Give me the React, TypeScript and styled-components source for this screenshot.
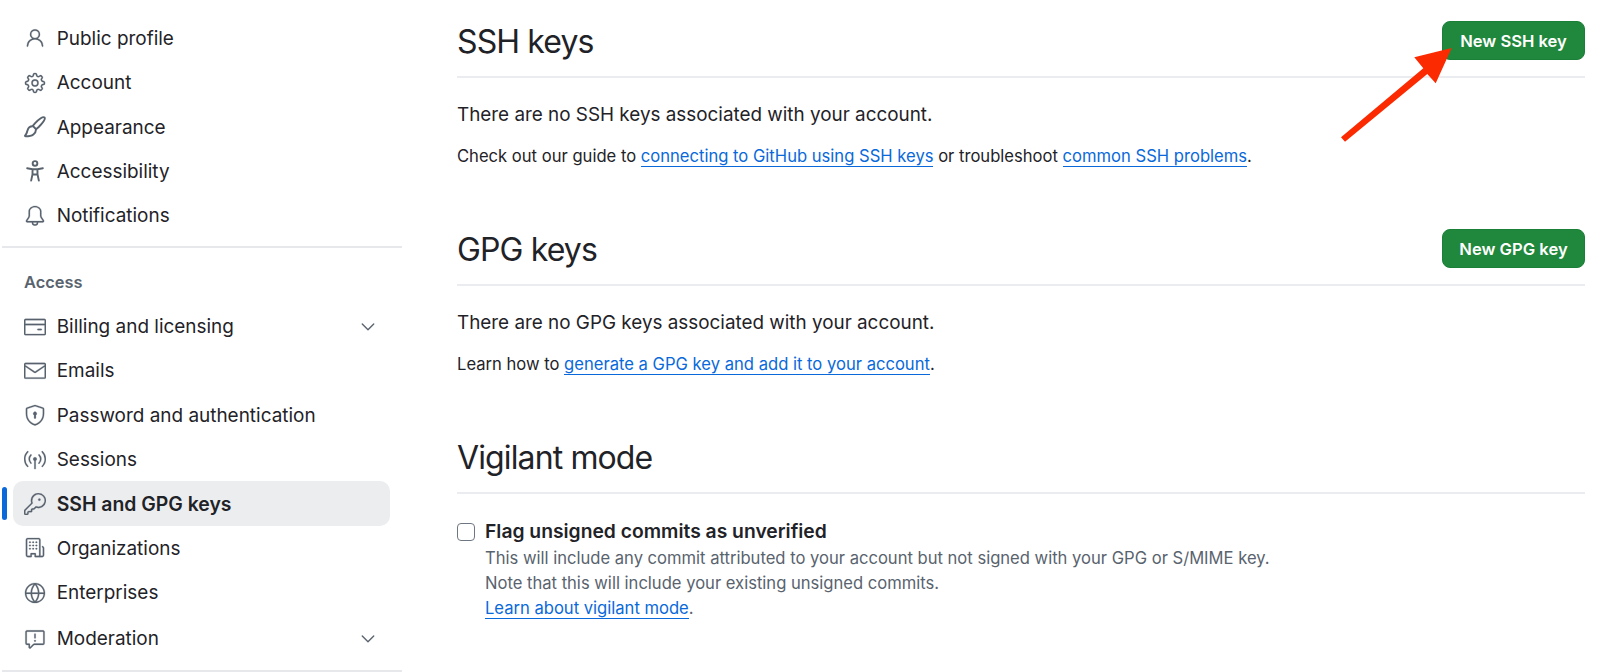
import React from "react";
import styled, { createGlobalStyle } from "styled-components";
import {
  GoPerson, GoGear, GoBell, GoCreditCard, GoMail,
  GoShieldLock, GoBroadcast, GoKey, GoOrganization, GoGlobe, GoReport, GoChevronDown,
} from "react-icons/go";

const Global = createGlobalStyle`
  html, body { margin: 0; padding: 0; background: #fff; }
  body { font-family: Inter, "Liberation Sans", sans-serif; color: #1f2328; width: 1600px; height: 672px; overflow: hidden; }
`;
const Page = styled.div`
  position: relative;
  display: grid;
  grid-template-columns: 402px 1128px;
  column-gap: 55px;
  height: 672px;
  overflow: hidden;
`;
const Sidebar = styled.nav`
  display: flex;
  flex-direction: column;
  padding-top: 15.6px;
`;
const Row = styled.div<{ $active?: boolean; $offset?: number }>`
  position: relative;
  display: flex;
  align-items: center;
  flex: none;
  height: 44.4px;
  margin: ${p => p.$offset ?? 0}px 0 0 12.7px;
  width: 377.3px;
  padding: 1px 0 0 11px;
  box-sizing: border-box;
  border-radius: 10px;
  font-size: ${p => (p.$active ? 19.4 : 18.95)}px;
  font-weight: ${p => (p.$active ? 600 : 400)};
  background: ${p => (p.$active ? "#ecedef" : "transparent")};
  color: #1f2328;
`;
const ActiveBar = styled.span`
  position: absolute;
  left: -11px;
  top: 5.6px;
  width: 5.3px;
  height: 33px;
  border-radius: 3px;
  background: #0969da;
`;
const IconSlot = styled.span`
  display: flex;
  width: 22px;
  margin-right: 11px;
  color: #59636e;
  svg { width: 22px; height: 22px; display: block; stroke-width: 0.25; }
`;
const Chevron = styled.span`
  position: absolute;
  right: 11px;
  display: flex;
  color: #59636e;
  svg { width: 22px; height: 22px; display: block; }
`;
const Divider = styled.hr<{ $gap: number }>`
  border: 0;
  flex: none;
  height: 2px;
  background: #e6e8ec;
  margin: ${p => p.$gap}px 0 0 1.7px;
  width: 400px;
`;
const GroupLabel = styled.div`
  font-size: 16.4px;
  font-weight: 600;
  color: #59636e;
  padding-left: 24px;
  margin: 22.7px 0 11.1px;
  line-height: 22px;
`;
const Main = styled.main`
  display: flex;
  flex-direction: column;
  padding-top: 21px;
`;
const Section = styled.section`
  height: 208px;
`;
const Head = styled.div`
  display: flex;
  align-items: flex-start;
  justify-content: space-between;
  height: 57px;
  box-sizing: border-box;
  border-bottom: 2px solid #ebecf0;
`;
const Title = styled.h2`
  margin: 0;
  font-size: 32px;
  line-height: 42px;
  letter-spacing: -0.88px;
  font-weight: 400;
  color: #1f2328;
`;
const PrimaryButton = styled.button`
  height: 39px;
  width: 143px;
  border: 1px solid #1a7f37;
  border-radius: 8px;
  background: #1f883d;
  color: #fff;
  padding: 0;
  font: 600 16.6px Inter, "Liberation Sans", sans-serif;
`;
const Lead = styled.p`
  margin: 24px 0 0;
  font-size: 18.87px;
  line-height: 26px;
`;
const Note = styled.p`
  margin: 15.3px 0 0;
  font-size: 16.6px;
  line-height: 26px;
`;
const Link = styled.a`
  color: #0969da;
  border-bottom: 1px solid #0969da;
  text-decoration: none;
`;
const CheckRow = styled.div`
  display: flex;
  gap: 10px;
  margin-top: 24px;
`;
const CheckBox = styled.span`
  width: 18px;
  height: 18px;
  margin-top: 5px;
  border: 1.5px solid #6e7781;
  border-radius: 4px;
  box-sizing: border-box;
  flex: none;
`;
const CheckTitle = styled.div`
  font-size: 19.3px;
  font-weight: 600;
  line-height: 26px;
  margin-bottom: 1.8px;
`;
const Hint = styled.div`
  font-size: 16.58px;
  line-height: 25.2px;
  color: #59636e;
`;
const ArrowSvg = styled.svg`
  position: absolute;
  left: 1330px;
  top: 40px;
  width: 130px;
  height: 110px;
`;

const PaintbrushIcon = () => (
  <svg viewBox="0 0 16 16">
    <g fill="none" stroke="currentColor" strokeWidth="1.4" strokeLinejoin="round">
      <path d="M14.9 1.1c-1-1-4 1.1-6.8 4.1L6.4 7.2l2.4 2.4 1.9-1.6c2.9-2.8 5.2-5.9 4.2-6.9z" />
      <path d="M6.3 7.5C4.2 7.5 3 8.8 2.6 10.4c-.3 1.4-.8 2.6-1.8 3.8-.2.3 0 .6.3.6 2 0 4.4-.3 5.7-1.4 1.4-1.1 2-2.5 1.9-4" />
    </g>
  </svg>
);
const AccessibilityIcon = () => (
  <svg viewBox="0 0 16 16">
    <g fill="none" stroke="currentColor" strokeWidth="1.4" strokeLinecap="round" strokeLinejoin="round">
      <circle cx="8" cy="2.5" r="1.7" />
      <path d="M2.3 6 6.2 6.7h3.6L13.7 6M6.2 6.9v3.4L5.2 15M9.8 6.9v3.4l1 4.7M6.2 10.6h3.6" />
    </g>
  </svg>
);

type Item = { label: string; icon: React.ComponentType; more?: boolean; active?: boolean; offset?: number };

const top: Item[] = [
  { label: "Public profile", icon: GoPerson },
  { label: "Account", icon: GoGear },
  { label: "Appearance", icon: PaintbrushIcon },
  { label: "Accessibility", icon: AccessibilityIcon },
  { label: "Notifications", icon: GoBell },
];
const access: Item[] = [
  { label: "Billing and licensing", icon: GoCreditCard, more: true },
  { label: "Emails", icon: GoMail },
  { label: "Password and authentication", icon: GoShieldLock },
  { label: "Sessions", icon: GoBroadcast },
  { label: "SSH and GPG keys", icon: GoKey, active: true },
  { label: "Organizations", icon: GoOrganization },
  { label: "Enterprises", icon: GoGlobe },
  { label: "Moderation", icon: GoReport, more: true, offset: 1.5 },
];

const NavRow = ({ item }: { item: Item }) => {
  const Icon = item.icon;
  return (
    <Row $active={item.active} $offset={item.offset}>
      {item.active && <ActiveBar />}
      <IconSlot><Icon /></IconSlot>
      {item.label}
      {item.more && <Chevron><GoChevronDown /></Chevron>}
    </Row>
  );
};

export default function App() {
  return (
    <Page>
      <Global />
      <Sidebar>
        {top.map(i => <NavRow key={i.label} item={i} />)}
        <Divider $gap={8.5} />
        <GroupLabel>Access</GroupLabel>
        {access.map(i => <NavRow key={i.label} item={i} />)}
        <Divider $gap={9.5} />
      </Sidebar>
      <Main>
        <Section>
          <Head>
            <Title>SSH keys</Title>
            <PrimaryButton>New SSH key</PrimaryButton>
          </Head>
          <Lead>There are no SSH keys associated with your account.</Lead>
          <Note>
            Check out our guide to <Link>connecting to GitHub using SSH keys</Link> or troubleshoot <Link>common SSH problems</Link>.
          </Note>
        </Section>
        <Section>
          <Head>
            <Title>GPG keys</Title>
            <PrimaryButton>New GPG key</PrimaryButton>
          </Head>
          <Lead>There are no GPG keys associated with your account.</Lead>
          <Note>
            Learn how to <Link>generate a GPG key and add it to your account</Link>.
          </Note>
        </Section>
        <Section>
          <Head><Title>Vigilant mode</Title></Head>
          <CheckRow>
            <CheckBox />
            <div>
              <CheckTitle>Flag unsigned commits as unverified</CheckTitle>
              <Hint>This will include any commit attributed to your account but not signed with your GPG or S/MIME key.</Hint>
              <Hint>Note that this will include your existing unsigned commits.</Hint>
              <Hint><Link>Learn about vigilant mode</Link>.</Hint>
            </div>
          </CheckRow>
        </Section>
      </Main>
      <ArrowSvg viewBox="0 0 130 110">
        <polygon fill="#fb2a00" points="121.7,8 84.3,17.3 93.3,28.3 11,97.3 15,101.7 97.3,34 105.7,43.3" />
      </ArrowSvg>
    </Page>
  );
}
